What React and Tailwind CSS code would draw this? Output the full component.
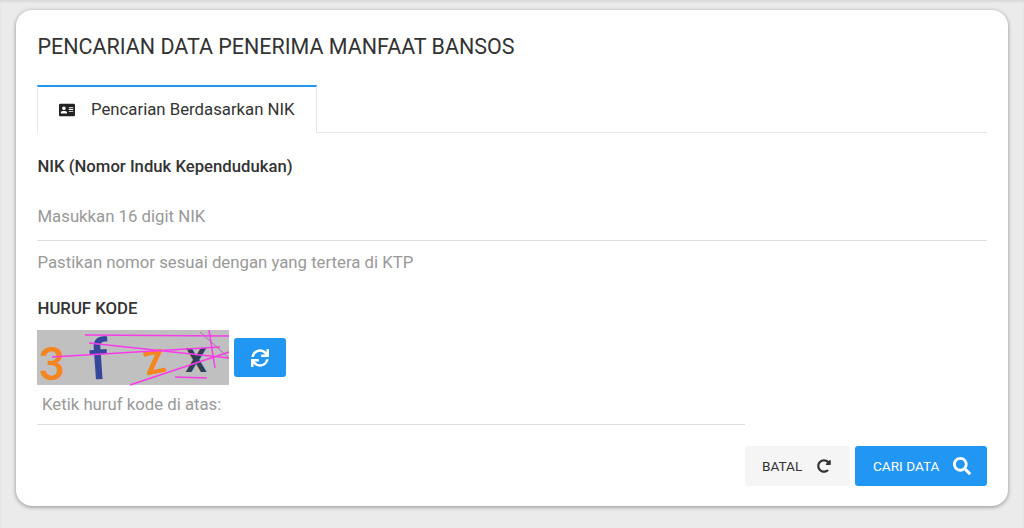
import React from 'react';
import { FaAddressCard, FaSync, FaRedoAlt, FaSearch } from 'react-icons/fa';

function Captcha() {
  return (
    <svg width="192" height="55" viewBox="0 0 192 55" className="block bg-[#c0c0c0] shrink-0 overflow-visible">
      <text x="2" y="50" fontSize="46" fontWeight="500" fontFamily="Roboto, sans-serif" fill="#f5851f">3</text>
      <text x="52" y="49" fontSize="56" fontWeight="500" fontFamily="Roboto, sans-serif" fill="#34479c" transform="rotate(-4 62 30)">f</text>
      <text x="106" y="44" fontSize="44" fontWeight="500" fontFamily="Roboto, sans-serif" fill="#f5851f" transform="rotate(-12 116 30)">z</text>
      <text x="148" y="42" fontSize="44" fontWeight="500" fontFamily="Roboto, sans-serif" fill="#2f4055">x</text>
      <g stroke="#f63ce8" strokeWidth="1.5" fill="none">
        <line x1="48" y1="5" x2="192" y2="6" />
        <line x1="15" y1="27" x2="183" y2="17" />
        <line x1="52" y1="13" x2="192" y2="28" />
        <line x1="93" y1="55" x2="192" y2="22" />
        <line x1="138" y1="47" x2="170" y2="48" />
        <line x1="172" y1="0" x2="178" y2="38" />
      </g>
      <line x1="163" y1="2" x2="192" y2="28" stroke="#b868b8" strokeWidth="1" />
    </svg>
  );
}

export default function App() {
  return (
    <div className="h-[528px] bg-[#ebebeb] shadow-[inset_0_2px_2px_rgba(0,0,0,0.08)] pt-[10px] px-4 font-['Roboto',sans-serif] overflow-hidden">
      <div className="h-[496px] bg-white rounded-2xl shadow-[0_1px_4px_rgba(0,0,0,0.4)] pt-[21px] pl-[21.5px] pr-[21px]">
        <h1 className="text-[21.48px] leading-[32px] text-[#333] h-[54px]">PENCARIAN DATA PENERIMA MANFAAT BANSOS</h1>

        <div className="border-b border-[#e6e6e6] h-[48px] -ml-[0.5px]">
          <div className="w-[280px] h-[48px] border-t-2 border-x border-t-[#2196f3] border-x-[#e6e6e6] bg-white flex items-center pl-[21px] text-[#333]">
            <FaAddressCard className="text-[#222] text-[16px] mr-[16px]" />
            <span className="text-[16.75px]">Pencarian Berdasarkan NIK</span>
          </div>
        </div>

        <div className="mt-[22px] text-[16.7px] leading-[24px] font-medium text-[#333]">NIK (Nomor Induk Kependudukan)</div>
        <div className="mt-[25px] h-[37px] border-b border-[#e0e0e0] text-[16.75px] leading-[24px] text-[#999] -ml-[0.5px] pl-[0.5px]">Masukkan 16 digit NIK</div>
        <p className="mt-[9px] text-[16.75px] leading-[24px] text-[#999]">Pastikan nomor sesuai dengan yang tertera di KTP</p>

        <div className="mt-[22px] text-[16.75px] leading-[25px] font-medium text-[#333]">HURUF KODE</div>
        <div className="mt-[9px] -ml-[0.5px] flex items-center gap-[4.5px]">
          <Captcha />
          <button className="w-[52px] h-[39px] bg-[#2196f3] rounded-[3px] flex items-center justify-center text-white">
            <FaSync className="text-[18px]" />
          </button>
        </div>

        <div className="w-[708px] h-[40px] -ml-[0.5px] border-b border-[#e0e0e0] pl-[5px] pt-[7px] text-[16.75px] leading-[24px] text-[#999]">Ketik huruf kode di atas:</div>

        <div className="mt-[21px] flex justify-end gap-[5px]">
          <button className="w-[105px] h-[40px] bg-[#f5f5f5] rounded-[3px] flex items-center pl-[17px] text-[#333] text-[13.6px]">
            BATAL
            <FaRedoAlt className="ml-[15px] text-[14px]" />
          </button>
          <button className="w-[132px] h-[40px] bg-[#2196f3] rounded-[3px] flex items-center pl-[18px] text-white text-[13.6px]">
            CARI DATA
            <FaSearch className="ml-[14px] text-[18px]" />
          </button>
        </div>
      </div>
    </div>
  );
}
